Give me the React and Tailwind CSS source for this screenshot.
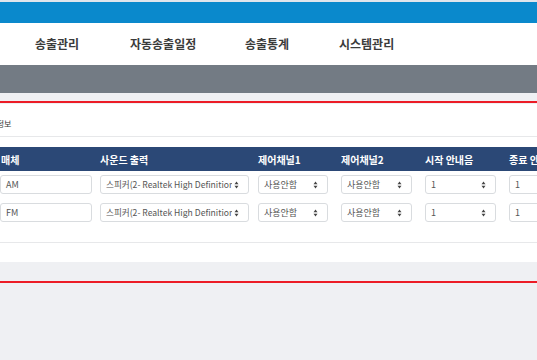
import React from "react";

function Arrows() {
    return (
        <svg width="5" height="8" viewBox="0 0 5 8" className="absolute right-[9px] top-1/2 -translate-y-1/2">
            <path d="M0.5 3.2 L2.5 0.6 L4.5 3.2 Z" fill="#444" />
            <path d="M0.5 4.8 L2.5 7.4 L4.5 4.8 Z" fill="#444" />
        </svg>
    );
}

function Select({ value, className, textClass = "text-[9px]" }) {
    return (
        <div className={`relative shrink-0 h-[19px] border border-[#d9dcdf] rounded-[3px] bg-white ${className}`}>
            <div className={`ml-[5px] mr-[16px] leading-[17px] whitespace-nowrap overflow-hidden text-[#555] ${textClass}`}>
                {value}
            </div>
            <Arrows />
        </div>
    );
}

function Row({ media }) {
    return (
        <div className="flex items-center">
            <div className="shrink-0 w-[92px] h-[19px] border border-[#d9dcdf] rounded-[3px] bg-white pl-[5px] leading-[17px] text-[9px] text-[#555]">
                {media}
            </div>
            <Select
                value="스피커(2- Realtek High Definition Audio)"
                className="ml-[8px] w-[149px]"
                textClass="text-[8.6px]"
            />
            <Select value="사용안함" className="ml-[9px] w-[70px]" />
            <Select value="사용안함" className="ml-[13px] w-[71px]" />
            <Select value="1" className="ml-[13px] w-[71px]" />
            <Select value="1" className="ml-[13px] w-[71px]" />
        </div>
    );
}

export default function App() {
    const menus = [
        { label: "송출관리", cls: "w-[95px]" },
        { label: "자동송출일정", cls: "w-[115px]" },
        { label: "송출통계", cls: "w-[94px]" },
        { label: "시스템관리", cls: "w-[100px]" },
    ];

    return (
        <div className="w-[537px] h-[360px] overflow-hidden bg-[#eff0f3] font-['Noto_Sans_CJK_KR','Noto_Sans',sans-serif]">
            {/* Top bar */}
            <div className="h-[2px] bg-[#dfe5ec]" />
            <div className="h-[21px] bg-[#0a89cc]" />

            {/* Menu */}
            <nav className="h-[42px] bg-white flex items-center pl-[35px] text-[12px] font-semibold text-[#3b3b3b] whitespace-nowrap">
                {menus.map((m) => (
                    <span key={m.label} className={`shrink-0 ${m.cls}`}>
                        {m.label}
                    </span>
                ))}
            </nav>
            <div className="h-[28px] bg-[#737b84]" />

            <div className="h-[8px]" />
            <div className="h-[2px] bg-[#ec1c26]" />
            <div className="h-[1px]" />

            {/* Card */}
            <section className="bg-white">
                <div className="h-[33px] border-b border-[#e7e8ea] flex items-end pb-[6px] overflow-hidden">
                    <span className="-ml-[18px] text-[8px] text-[#333] whitespace-nowrap">매체정보</span>
                </div>
                <div className="pt-[10px] pb-[20px] border-b border-[#e7e8ea] overflow-hidden">
                    <div className="h-[24px] bg-[#2b4876] flex items-center text-[10px] font-bold text-white whitespace-nowrap">
                        <span className="shrink-0 w-[92px] pl-[1px]">매체</span>
                        <span className="shrink-0 ml-[8px] w-[149px]">사운드 출력</span>
                        <span className="shrink-0 ml-[9px] w-[70px]">제어채널1</span>
                        <span className="shrink-0 ml-[13px] w-[71px]">제어채널2</span>
                        <span className="shrink-0 ml-[13px] w-[71px]">시작 안내음</span>
                        <span className="shrink-0 ml-[13px] w-[71px]">종료 안내음</span>
                    </div>
                    <div className="flex flex-col gap-[9px] pt-[4px]">
                        <Row media="AM" />
                        <Row media="FM" />
                    </div>
                </div>
                <div className="h-[19px]" />
            </section>

            <div className="h-[19px]" />
            <div className="h-[2px] bg-[#ec1c26]" />
        </div>
    );
}
